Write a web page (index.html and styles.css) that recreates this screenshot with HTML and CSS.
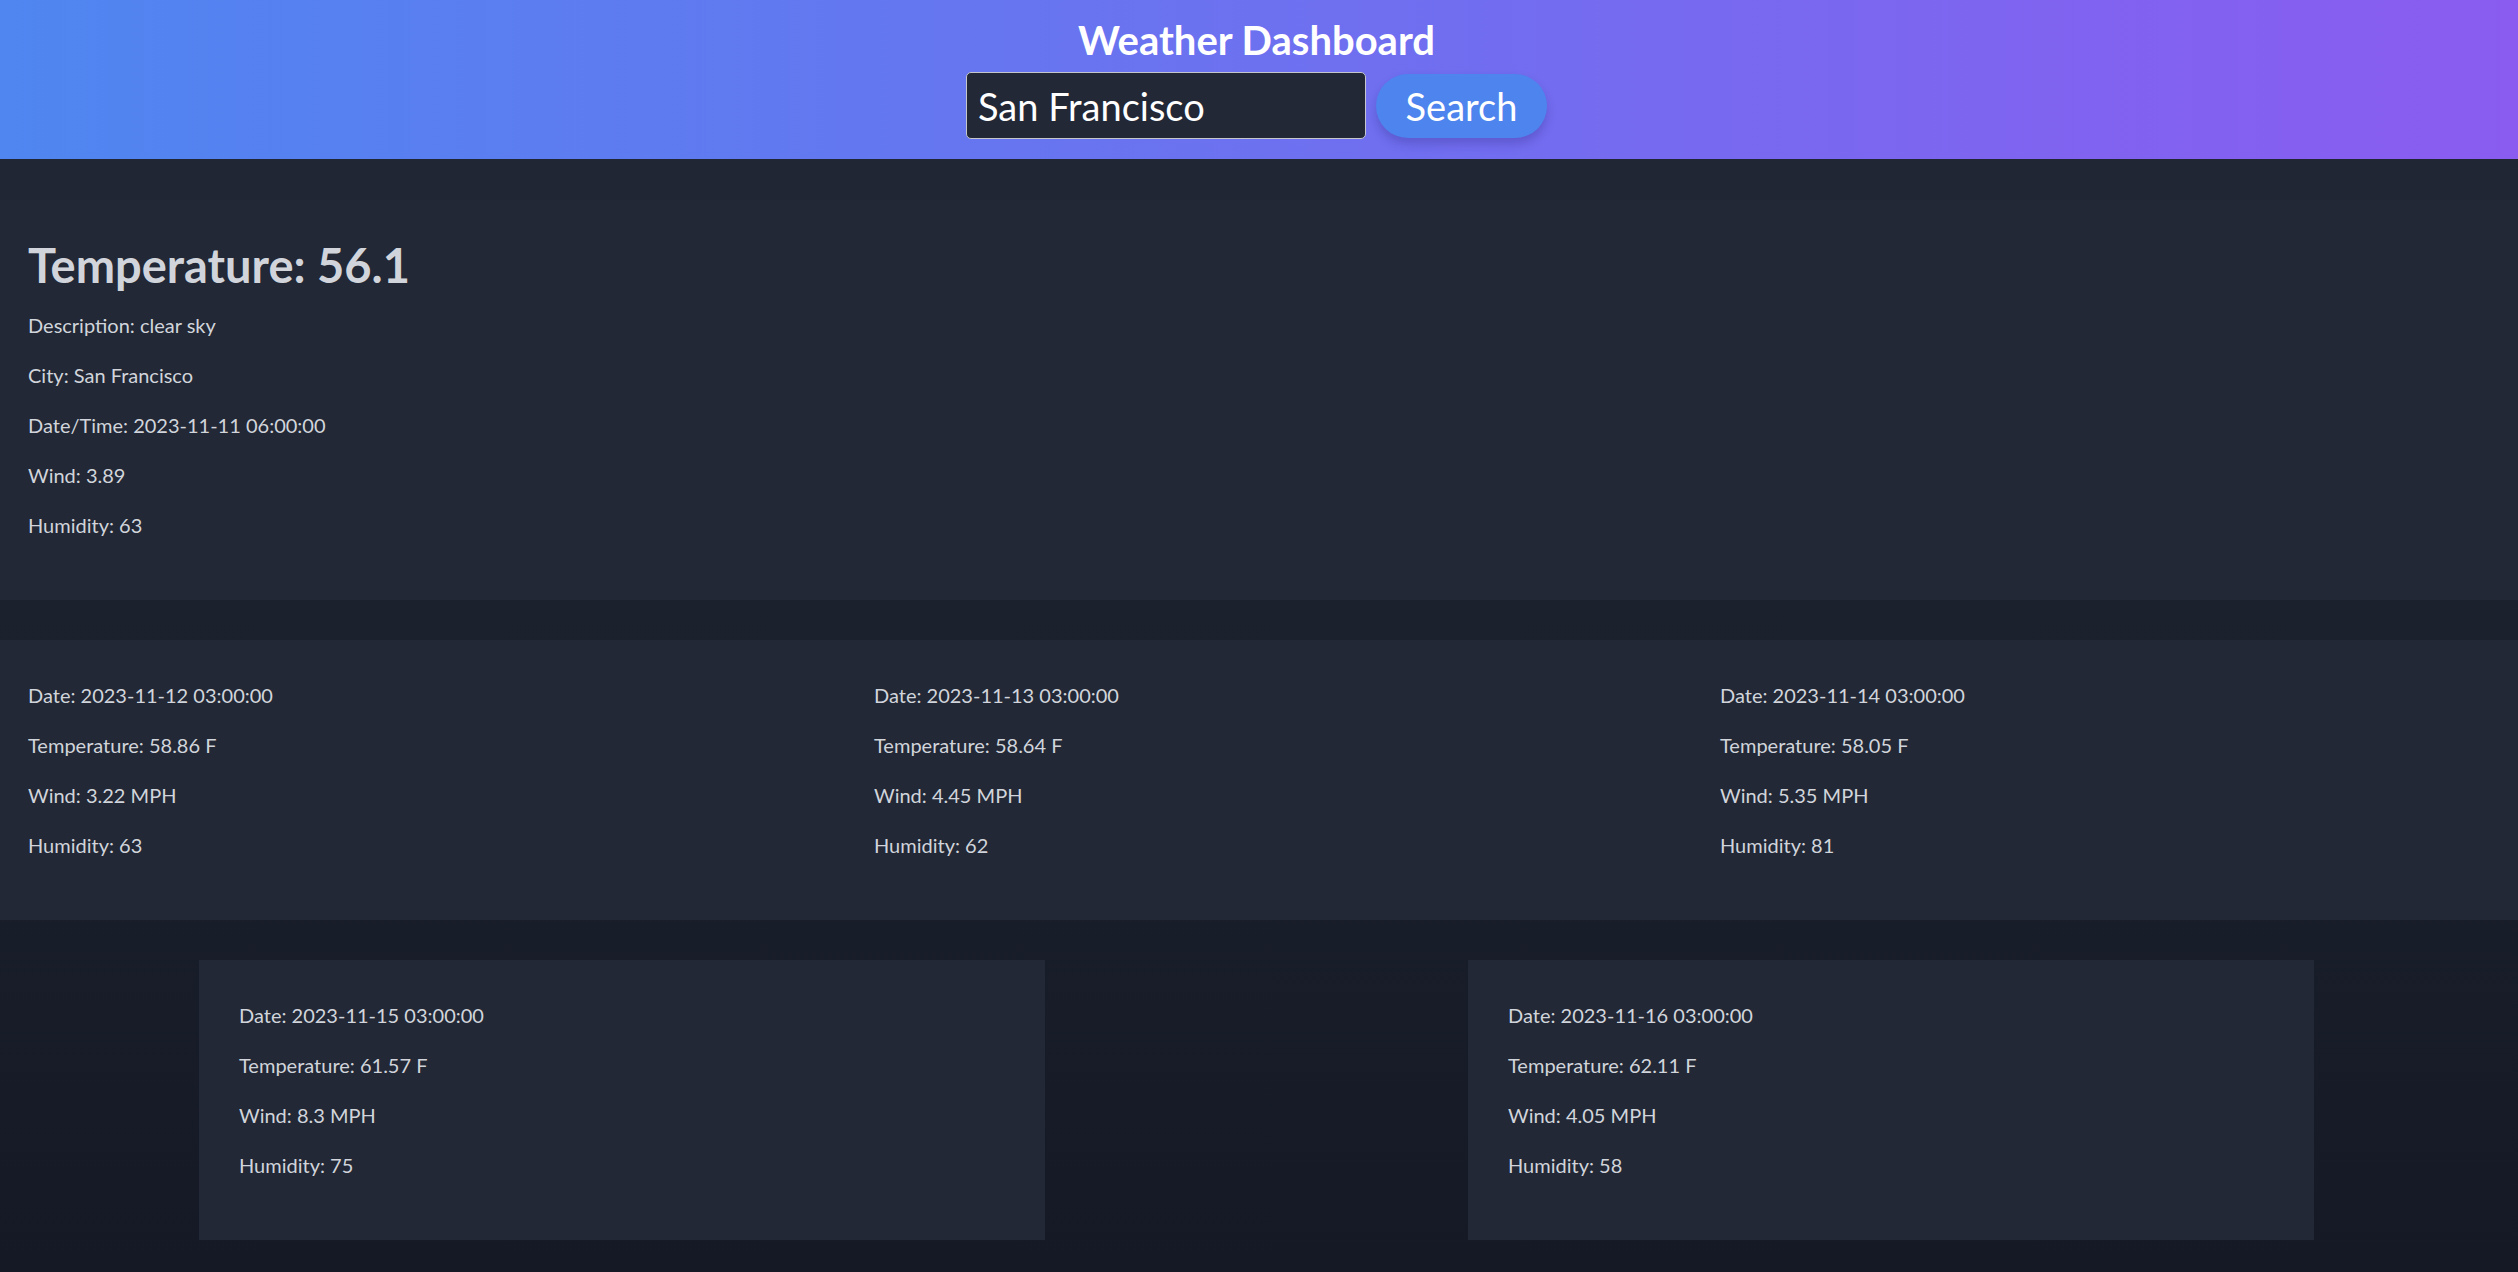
FILE: index.html
```html
<!DOCTYPE html>
<html lang="en">
<head>
<meta charset="utf-8">
<title>Weather Dashboard</title>
<link rel="stylesheet" href="styles.css">
</head>
<body>
<header class="topbar">
  <h1 class="title">Weather Dashboard</h1>
  <form class="search">
    <input class="search-input" type="text" value="San Francisco">
    <button class="search-btn" type="button">Search</button>
  </form>
</header>
<main class="content">
  <section class="card current">
    <h2 class="current-temp">Temperature: 56.1</h2>
    <p>Description: clear sky</p>
    <p>City: San Francisco</p>
    <p>Date/Time: 2023-11-11 06:00:00</p>
    <p>Wind: 3.89</p>
    <p>Humidity: 63</p>
  </section>
  <section class="forecast-row">
    <div class="card day">
      <p>Date: 2023-11-12 03:00:00</p>
      <p>Temperature: 58.86 F</p>
      <p>Wind: 3.22 MPH</p>
      <p>Humidity: 63</p>
    </div>
    <div class="card day">
      <p>Date: 2023-11-13 03:00:00</p>
      <p>Temperature: 58.64 F</p>
      <p>Wind: 4.45 MPH</p>
      <p>Humidity: 62</p>
    </div>
    <div class="card day">
      <p>Date: 2023-11-14 03:00:00</p>
      <p>Temperature: 58.05 F</p>
      <p>Wind: 5.35 MPH</p>
      <p>Humidity: 81</p>
    </div>
  </section>
  <section class="forecast-row bottom">
    <div class="card day">
      <p>Date: 2023-11-15 03:00:00</p>
      <p>Temperature: 61.57 F</p>
      <p>Wind: 8.3 MPH</p>
      <p>Humidity: 75</p>
    </div>
    <div class="card day">
      <p>Date: 2023-11-16 03:00:00</p>
      <p>Temperature: 62.11 F</p>
      <p>Wind: 4.05 MPH</p>
      <p>Humidity: 58</p>
    </div>
  </section>
</main>
</body>
</html>
```

FILE: styles.css
```css
* { box-sizing: border-box; }

html, body {
  margin: 0;
  padding: 0;
}

body {
  font-family: Lato, "Open Sans", sans-serif;
  font-size: 20px;
  line-height: 30px;
  color: #d1d5db;
  background: linear-gradient(to bottom, #222836 0%, #1b202d 55%, #141925 100%);
  min-height: 1272px;
  overflow: hidden;
}

.topbar {
  height: 159px;
  padding: 16px 5px 0 0;
  background: linear-gradient(to right, #4f86f0, #8a5cf0);
  display: flex;
  flex-direction: column;
  align-items: center;
}

.title {
  margin: 0;
  font-size: 40px;
  line-height: 48px;
  font-weight: 700;
  color: #ffffff;
}

.search {
  margin-top: 8px;
  display: flex;
  align-items: center;
  gap: 10px;
}

.search-input {
  width: 400px;
  height: 67px;
  padding: 0 11px;
  background: #222836;
  border: 1.5px solid #c4c6cc;
  border-radius: 5px;
  color: #ffffff;
  font-family: Lato, "Open Sans", sans-serif;
  font-size: 38px;
}

.search-btn {
  width: 171px;
  height: 64px;
  padding: 0;
  border: none;
  border-radius: 32px;
  background: #4d84ed;
  color: #ffffff;
  font-family: Lato, "Open Sans", sans-serif;
  font-size: 38px;
  box-shadow: 0 6px 10px rgba(40, 30, 110, 0.25);
}

.content {
  margin: 0 -12px;
  padding-top: 41px;
}

.card {
  background: #222836;
  padding: 40px 40px 60px;
}

.card p {
  margin: 0 0 20px;
}

.card p:last-child {
  margin-bottom: 0;
}

.current-temp {
  margin: 0 0 20px;
  font-size: 47px;
  line-height: 50px;
  font-weight: 700;
  color: #d1d5db;
}

.forecast-row {
  margin-top: 40px;
  display: grid;
  grid-template-columns: repeat(3, 846px);
}

.forecast-row.bottom {
  display: flex;
  padding-left: 211px;
  gap: 423px;
}

.forecast-row.bottom .card {
  width: 846px;
}
```
